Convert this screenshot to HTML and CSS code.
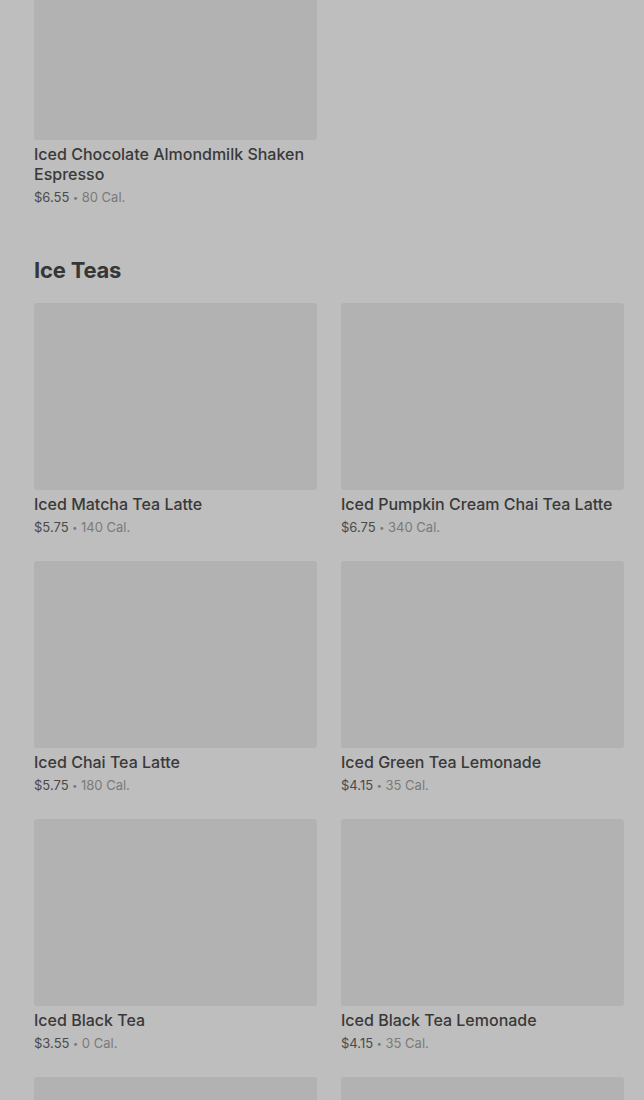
FILE: index.html
```html
<!DOCTYPE html>
<html>
<head>
<meta charset="utf-8">
<link rel="stylesheet" href="styles.css">
</head>
<body>
<main class="page">
  <section class="section first">
    <div class="grid">
      <div class="card">
        <div class="thumb"></div>
        <div class="title">Iced Chocolate Almondmilk Shaken Espresso</div>
        <div class="meta"><span class="price">$6.55</span> <span class="dot">•</span> <span class="cal">80 Cal.</span></div>
      </div>
    </div>
  </section>
  <section class="section">
    <h2 class="heading">Ice Teas</h2>
    <div class="grid">
      <div class="card">
        <div class="thumb"></div>
        <div class="title">Iced Matcha Tea Latte</div>
        <div class="meta"><span class="price">$5.75</span> <span class="dot">•</span> <span class="cal">140 Cal.</span></div>
      </div>
      <div class="card">
        <div class="thumb"></div>
        <div class="title">Iced Pumpkin Cream Chai Tea Latte</div>
        <div class="meta"><span class="price">$6.75</span> <span class="dot">•</span> <span class="cal">340 Cal.</span></div>
      </div>
      <div class="card">
        <div class="thumb"></div>
        <div class="title">Iced Chai Tea Latte</div>
        <div class="meta"><span class="price">$5.75</span> <span class="dot">•</span> <span class="cal">180 Cal.</span></div>
      </div>
      <div class="card">
        <div class="thumb"></div>
        <div class="title">Iced Green Tea Lemonade</div>
        <div class="meta"><span class="price">$4.15</span> <span class="dot">•</span> <span class="cal">35 Cal.</span></div>
      </div>
      <div class="card">
        <div class="thumb"></div>
        <div class="title">Iced Black Tea</div>
        <div class="meta"><span class="price">$3.55</span> <span class="dot">•</span> <span class="cal">0 Cal.</span></div>
      </div>
      <div class="card">
        <div class="thumb"></div>
        <div class="title">Iced Black Tea Lemonade</div>
        <div class="meta"><span class="price">$4.15</span> <span class="dot">•</span> <span class="cal">35 Cal.</span></div>
      </div>
      <div class="card">
        <div class="thumb"></div>
      </div>
      <div class="card">
        <div class="thumb"></div>
      </div>
    </div>
  </section>
</main>
</body>
</html>
```

FILE: styles.css
```css
html, body {
  margin: 0;
  padding: 0;
  background: #bebebe;
  overflow: hidden;
}
body {
  font-family: Inter, "Noto Sans", Roboto, sans-serif;
  color: #3a3a3a;
}
.page {
  padding: 0 20px 0 34px;
  margin-top: -47px;
}
.section.first {
  margin-bottom: 49px;
}
.heading {
  margin: 0 0 19px;
  font-size: 22px;
  line-height: 28px;
  font-weight: 700;
  color: #363636;
  letter-spacing: -0.2px;
}
.grid {
  display: grid;
  grid-template-columns: 283px 283px;
  column-gap: 24px;
  row-gap: 24px;
}
.card {
  display: flex;
  flex-direction: column;
}
.thumb {
  height: 187px;
  background: #b2b2b2;
  border-radius: 3px;
}
.title {
  margin-top: 4px;
  font-size: 16px;
  line-height: 20px;
  font-weight: 500;
  color: #393939;
}
.meta {
  margin-top: 3px;
  height: 20px;
  font-size: 13px;
  line-height: 20px;
  color: #4a4a4a;
}
.dot {
  font-size: 9px;
  line-height: 0;
  vertical-align: 1px;
  color: #777;
}
.cal {
  color: #7a7a7a;
}
```
